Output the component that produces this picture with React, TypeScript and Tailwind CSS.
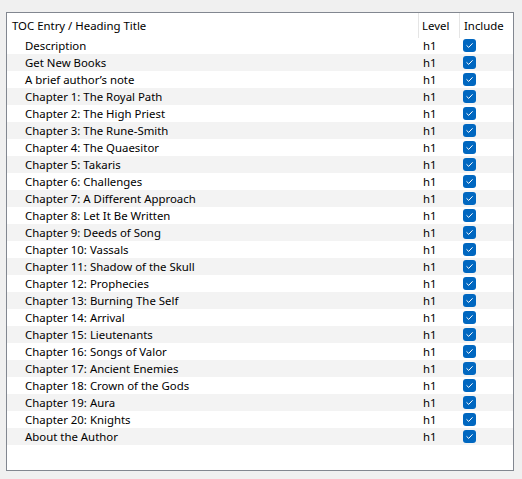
import React from "react";

const rows = [
  "Description",
  "Get New Books",
  "A brief author\u2019s note",
  "Chapter 1: The Royal Path",
  "Chapter 2: The High Priest",
  "Chapter 3: The Rune-Smith",
  "Chapter 4: The Quaesitor",
  "Chapter 5: Takaris",
  "Chapter 6: Challenges",
  "Chapter 7: A Different Approach",
  "Chapter 8: Let It Be Written",
  "Chapter 9: Deeds of Song",
  "Chapter 10: Vassals",
  "Chapter 11: Shadow of the Skull",
  "Chapter 12: Prophecies",
  "Chapter 13: Burning The Self",
  "Chapter 14: Arrival",
  "Chapter 15: Lieutenants",
  "Chapter 16: Songs of Valor",
  "Chapter 17: Ancient Enemies",
  "Chapter 18: Crown of the Gods",
  "Chapter 19: Aura",
  "Chapter 20: Knights",
  "About the Author",
];

function Check() {
  return (
    <div className="w-[13px] h-[13px] rounded-[3px] bg-[#0067c0] flex items-center justify-center">
      <svg width="9" height="9" viewBox="0 0 9 9" fill="none">
        <path d="M1.8 4.6 L3.7 6.4 L7.3 2.6" stroke="white" strokeWidth="1" strokeLinecap="round" strokeLinejoin="round" />
      </svg>
    </div>
  );
}

export default function App() {
  return (
    <div
      className="w-[522px] h-[479px] bg-[#f0f0f0] pt-[12px] pl-[6px] text-[11.4px] text-black"
      style={{ fontFamily: '"Noto Sans", "Open Sans", sans-serif' }}
    >
      <div className="w-[508px] h-[459px] border border-[#828790] bg-white">
        <div className="grid grid-cols-[412px_41px_1fr] h-[24px] leading-[25px]">
          <div className="pl-[5px] border-r border-[#e5e5e5]">TOC Entry / Heading Title</div>
          <div className="pl-[3px] border-r border-[#e5e5e5]">Level</div>
          <div className="pl-[4px]">Include</div>
        </div>
        {rows.map((r, i) => (
          <div
            key={r}
            className={`grid grid-cols-[412px_41px_1fr] h-[17px] leading-[17px] ${i % 2 === 1 ? "bg-[#f3f3f3]" : "bg-white"}`}
          >
            <div className="pl-[18px] whitespace-nowrap">{r}</div>
            <div className="pl-[4px]">h1</div>
            <div className="pl-[3px] flex items-center">
              <Check />
            </div>
          </div>
        ))}
      </div>
    </div>
  );
}
